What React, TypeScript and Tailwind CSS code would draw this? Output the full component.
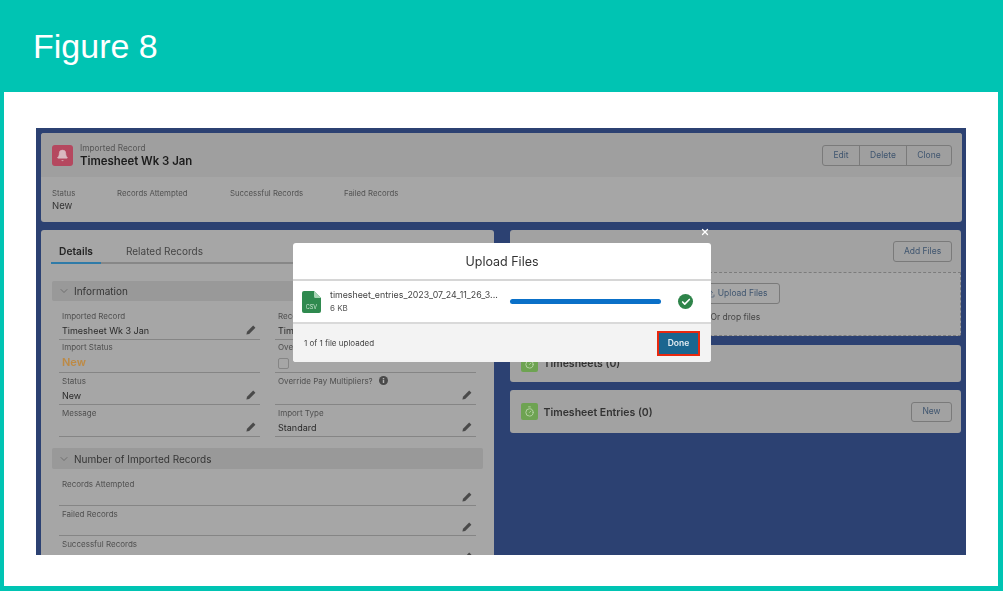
import React from 'react';
import { ChevronDown, Timer, Upload, X, Bell, Check } from 'lucide-react';

const sans = { fontFamily: 'Inter, "Liberation Sans", sans-serif' };

const EditIcon = () => (
  <svg viewBox="0 0 10 10" className="w-[10px] h-[10px] flex-shrink-0 text-[#4a4a4a]" fill="currentColor">
    <path d="M7.2 0.6 L9.4 2.8 L3.2 9 L0.4 9.6 L1 6.8 Z" />
  </svg>
);

const InfoDot = () => (
  <svg viewBox="0 0 10 10" className="w-[9px] h-[9px] ml-[6px] flex-shrink-0">
    <circle cx="5" cy="5" r="5" fill="#4a4a4a" />
    <rect x="4.2" y="4.4" width="1.6" height="3.4" fill="#b5b5b5" />
    <rect x="4.2" y="2.2" width="1.6" height="1.5" fill="#b5b5b5" />
  </svg>
);

const Field = ({ label, value, info, short }: { label: string; value?: string; info?: boolean; short?: boolean }) => (
  <div className={`${short ? 'h-[30px]' : 'h-[32px]'} border-b border-[#858585] px-[3px] pt-[1.5px] flex flex-col`}>
    <div className="flex items-center text-[8px] leading-[12px] text-[#4f4f4f]">
      <span className="truncate">{label}</span>
      {info && <InfoDot />}
    </div>
    <div className="flex items-center justify-between pr-[1px] h-[17px]">
      <span className="mt-[2px] text-[9px] text-[#2a2a2a] truncate">{value}</span>
      <EditIcon />
    </div>
  </div>
);

const SectionHead = ({ title, className }: { title: string; className: string }) => (
  <div className={`rounded-[2px] bg-[#999999] flex items-center pl-[6px] gap-[4px] text-[10px] text-[#353535] ${className}`}>
    <ChevronDown className="w-[12px] h-[12px] text-[#555]" strokeWidth={1.25} />
    <span className="mt-[1px]">{title}</span>
  </div>
);

const OutlineBtn = ({ label, className }: { label: string; className?: string }) => (
  <button className={`border border-[#7a7a7a] rounded-[3px] text-[8.5px] text-[#3f556f] ${className ?? ''}`}>{label}</button>
);

const HighlightItem = ({ label, value, className }: { label: string; value?: string; className: string }) => (
  <div className={className}>
    <div className="text-[7.8px] leading-[12px] text-[#525252]">{label}</div>
    {value && <div className="text-[9.5px] leading-[13px] text-[#333]">{value}</div>}
  </div>
);

const TimerBadge = () => (
  <div className="w-[17px] h-[17px] rounded-[2px] bg-[#6ea352] flex items-center justify-center flex-shrink-0">
    <Timer className="w-[11px] h-[11px] text-[#b9d4a9]" strokeWidth={2} />
  </div>
);

export default function App() {
  return (
    <div className="w-[1003px] h-[591px] bg-[#00c4b3] flex flex-col overflow-hidden" style={sans}>
      <div className="h-[92px] flex-shrink-0 pl-[33px] pt-[26px] text-[34px] leading-[40px] text-white" style={{ fontFamily: '"Liberation Sans", Arial, sans-serif' }}>
        Figure 8
      </div>

      <div className="ml-[4px] w-[994px] h-[494px] bg-white pt-[36px] pl-[32px]">
        {/* screenshot */}
        <div className="relative w-[930px] h-[427px] bg-[#2c4172] overflow-hidden pt-[5px] px-[5px] blur-[0.4px]">
          {/* highlights panel */}
          <div className="w-[921px] h-[89px] rounded-[3px] bg-[#a6a6a6] overflow-hidden">
            <div className="h-[44px] bg-[#9f9f9f] flex items-center pl-[11px] pr-[10px]">
              <div className="w-[21px] h-[21px] rounded-[3px] bg-[#b5485f] flex items-center justify-center">
                <Bell className="w-[13px] h-[13px] text-[#d9b9c0]" fill="currentColor" strokeWidth={1} />
              </div>
              <div className="ml-[7px] flex-1">
                <div className="text-[8.3px] leading-[11px] text-[#555]">Imported Record</div>
                <div className="text-[11.4px] leading-[14px] font-semibold text-[#1c1c1c]">Timesheet Wk 3 Jan</div>
              </div>
              <div className="flex h-[21px] border border-[#7a7a7a] rounded-[3px] text-[8.5px] text-[#3f556f]">
                <div className="w-[37px] flex items-center justify-center border-r border-[#7a7a7a]">Edit</div>
                <div className="w-[47px] flex items-center justify-center border-r border-[#7a7a7a]">Delete</div>
                <div className="w-[44px] flex items-center justify-center">Clone</div>
              </div>
            </div>
            <div className="flex pl-[11px] pt-[10px]">
              <HighlightItem label="Status" value="New" className="w-[65px]" />
              <HighlightItem label="Records Attempted" className="w-[113px]" />
              <HighlightItem label="Successful Records" className="w-[114px]" />
              <HighlightItem label="Failed Records" className="w-[80px]" />
            </div>
          </div>

          <div className="flex gap-[16px] mt-[8px]">
            {/* details */}
            <div className="w-[453px] h-[340px] rounded-t-[3px] bg-[#a6a6a6] px-[11px] pt-[9px]">
              <div className="flex h-[25px] border-b-2 border-[#878787] text-[10px]">
                <div className="w-[50px] h-[25px] border-b-2 border-[#2f7ba8] text-center text-[10.2px] font-semibold text-[#242424] leading-[25px] -ml-[1px]">Details</div>
                <div className="ml-[25px] text-[#444] leading-[25px]">Related Records</div>
              </div>
              <SectionHead title="Information" className="h-[20px] mt-[17px]" />
              <div className="grid grid-cols-[201px_201px] gap-x-[15px] pl-[7px] mt-[7px]">
                <Field label="Imported Record" value="Timesheet Wk 3 Jan" />
                <Field label="Record Name" value="Timesheet Wk 3 Jan" />
                <div className="h-[33px] border-b border-[#858585] px-[3px] pt-[1px]">
                  <div className="text-[8px] leading-[12px] text-[#4f4f4f]">Import Status</div>
                  <div className="text-[11px] leading-[18px] font-semibold text-[#bd8a45]">New</div>
                </div>
                <div className="h-[33px] border-b border-[#858585] px-[3px] pt-[1px]">
                  <div className="text-[8px] leading-[12px] text-[#4f4f4f]">Ove</div>
                  <div className="mt-[5px] w-[11px] h-[11px] rounded-[2px] border border-[#858585]" />
                </div>
                <Field label="Status" value="New" />
                <Field label="Override Pay Multipliers?" info />
                <Field label="Message" />
                <Field label="Import Type" value="Standard" />
              </div>
              <SectionHead title="Number of Imported Records" className="h-[21px] mt-[11px]" />
              <div className="pl-[7px] mt-[7px] w-[424px]">
                <Field label="Records Attempted" short />
                <Field label="Failed Records" short />
                <Field label="Successful Records" short />
              </div>
            </div>

            {/* related lists */}
            <div className="w-[452px] flex flex-col">
              <div className="h-[106px] rounded-[3px] bg-[#a2a2a2] overflow-hidden">
                <div className="h-[42px] flex items-center justify-end pr-[9px]">
                  <OutlineBtn label="Add Files" className="w-[59px] h-[21px] mt-[1px]" />
                </div>
                <div className="h-[64px] bg-[#a6a6a6] border border-dashed border-[#7c7c7c] pl-[197px] pt-[10px]">
                  <div className="w-[74px] h-[21px] border border-[#7a7a7a] rounded-[3px] flex items-center justify-end pr-[11px] gap-[3px] text-[8.5px] text-[#3f556f] ml-[-2px]">
                    <Upload className="w-[8px] h-[8px]" />
                    Upload Files
                  </div>
                  <div className="mt-[7px] text-[8.5px] text-[#444] pl-[3px]">Or drop files</div>
                </div>
              </div>
              <div className="mt-[9px] h-[37px] rounded-[3px] bg-[#a2a2a2] flex items-center px-[11px] gap-[6px]">
                <TimerBadge />
                <span className="mt-[1px] text-[10.5px] font-semibold text-[#333]">Timesheets (0)</span>
              </div>
              <div className="mt-[8px] h-[43px] rounded-[3px] bg-[#a2a2a2] flex items-center pl-[11px] pr-[9px] gap-[6px]">
                <TimerBadge />
                <span className="mt-[2px] flex-1 text-[10.5px] font-semibold text-[#333]">Timesheet Entries (0)</span>
                <OutlineBtn label="New" className="w-[41px] h-[20px]" />
              </div>
            </div>
          </div>

          {/* upload modal */}
          <X className="absolute left-[664px] top-[99px] w-[10px] h-[10px] text-white" strokeWidth={3} />
          <div className="absolute left-[257px] top-[115px] w-[418px] h-[119px] rounded-[3px] bg-white overflow-hidden flex flex-col">
            <div className="h-[38px] flex-shrink-0 flex items-center justify-center pt-[2px] text-[12.5px] text-[#333] border-b-2 border-[#d6d6d6]">Upload Files</div>
            <div className="h-[43px] flex-shrink-0 flex items-center pl-[9px] border-b-2 border-[#d9d9d9]">
              <svg viewBox="0 0 19 22" className="w-[19px] h-[22px]">
                <path d="M2 0 H12 L19 7 V20 a2 2 0 0 1 -2 2 H2 a2 2 0 0 1 -2 -2 V2 a2 2 0 0 1 2 -2 Z" fill="#2f8a4f" />
                <path d="M12 0 L19 7 H13.5 a1.5 1.5 0 0 1 -1.5 -1.5 Z" fill="#a9d6b6" />
                <text x="9.5" y="18" textAnchor="middle" fontSize="5.5" fill="#cfe8d6" fontFamily="Inter, sans-serif">CSV</text>
              </svg>
              <div className="ml-[9px] w-[180px]">
                <div className="text-[8.8px] leading-[12px] text-[#444] whitespace-nowrap">timesheet_entries_2023_07_24_11_26_3...</div>
                <div className="text-[8px] leading-[12px] mt-[1px] text-[#555]">6 KB</div>
              </div>
              <div className="w-[151px] h-[5px] rounded-full bg-[#0a70c8]" />
              <div className="ml-[17px] w-[15px] h-[15px] rounded-full bg-[#2e844a] flex items-center justify-center">
                <Check className="w-[10px] h-[10px] text-white" strokeWidth={4} />
              </div>
            </div>
            <div className="flex-1 bg-[#f3f3f3] flex items-center justify-between pl-[11px] pr-[11px]">
              <span className="text-[8px] text-[#444]">1 of 1 file uploaded</span>
              <div className="w-[43px] h-[25px] border-2 border-[#e8290f] bg-[#1b6690] flex items-center justify-center text-[8.5px] font-semibold text-[#e4edf2]">Done</div>
            </div>
          </div>
        </div>
      </div>
    </div>
  );
}
